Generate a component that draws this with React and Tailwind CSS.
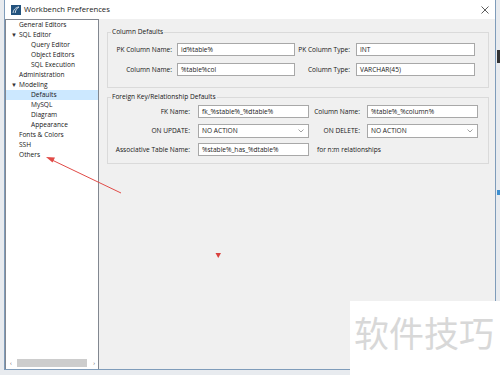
import React from "react";

const tree = [
  { label: "General Editors", level: 1 },
  { label: "SQL Editor", level: 1, open: true },
  { label: "Query Editor", level: 2 },
  { label: "Object Editors", level: 2 },
  { label: "SQL Execution", level: 2 },
  { label: "Administration", level: 1 },
  { label: "Modeling", level: 1, open: true },
  { label: "Defaults", level: 2, selected: true },
  { label: "MySQL", level: 2 },
  { label: "Diagram", level: 2 },
  { label: "Appearance", level: 2 },
  { label: "Fonts & Colors", level: 1 },
  { label: "SSH", level: 1 },
  { label: "Others", level: 1 },
];

const TextBox = ({ value, width }) => (
  <div
    className="h-[13px] border border-[#a8a8a8] bg-white pl-[3px] flex items-center text-[#1a1a1a]"
    style={{ width }}
  >
    {value}
  </div>
);

const SelectBox = ({ value, width }) => (
  <div
    className="h-[14px] border border-[#a8a8a8] bg-white pl-[3px] pr-[4px] flex items-center justify-between text-[#1a1a1a]"
    style={{ width }}
  >
    <span>{value}</span>
    <svg width="6" height="4" viewBox="0 0 6 4">
      <path d="M0.5 0.5 L3 3 L5.5 0.5" fill="none" stroke="#8a8a8a" strokeWidth="0.8" />
    </svg>
  </div>
);

const App = () => {
  return (
    <div
      className="relative w-[500px] h-[375px] overflow-hidden bg-[#e8ebef] text-[6.6px] text-[#161616]"
      style={{ fontFamily: '"Open Sans", "Noto Sans", sans-serif' }}
    >
      {/* Window */}
      <div className="ml-[4px] w-[492px] h-[370px] border-x border-b border-[#7f9cba] bg-white flex flex-col">
        {/* Title bar */}
        <div className="h-[19px] flex items-center bg-white">
          <svg className="ml-[6px]" width="10" height="10" viewBox="0 0 10 10">
            <rect width="10" height="10" fill="#22527d" />
            <path d="M2 8 C2.5 5 4 2.5 8 2 C6 3 4.5 5 4.2 8" fill="none" stroke="#dfe8f0" strokeWidth="0.9" />
          </svg>
          <span className="ml-[3px] text-[7.7px] text-[#1a1a1a]">Workbench Preferences</span>
          <svg className="ml-auto mr-[6px]" width="8" height="8" viewBox="0 0 8 8">
            <path d="M0.5 0.5 L7.5 7.5 M7.5 0.5 L0.5 7.5" stroke="#333" strokeWidth="0.8" />
          </svg>
        </div>

        {/* Body */}
        <div className="flex-1 flex bg-[#f0f0f0]">
          {/* Sidebar */}
          <div className="w-[94px] border-x border-t border-[#828790] bg-white flex flex-col">
            <div className="flex-1">
              {tree.map((item) => (
                <div
                  key={item.label}
                  className={`h-[10px] flex items-center leading-none ${item.selected ? "bg-[#cce8ff]" : ""}`}
                >
                  <span className="w-[13px] pl-[5px] text-[6px] text-[#333]">{item.open ? "▼" : ""}</span>
                  <span className={item.level === 2 ? "ml-[12px]" : ""}>{item.label}</span>
                </div>
              ))}
            </div>
            <div className="h-[10px] mb-[1px] flex items-center text-[6px] text-[#555]">
              <span className="w-[11px] pl-[4px]">‹</span>
              <div className="w-[70px] h-[8px] bg-[#cdcdcd]" />
              <span className="ml-auto pr-[3px]">›</span>
            </div>
          </div>

          {/* Content */}
          <div className="flex-1 pt-[8px] pl-[8px]">
            <fieldset className="w-[382px] border border-[#dadada] pb-[11px]">
              <legend className="ml-[3px] px-[1px] leading-[10px]">Column Defaults</legend>
              <div className="mt-[6px] flex items-center">
                <span className="w-[64px] text-right">PK Column Name:</span>
                <div className="w-[5px]" />
                <TextBox value="id%table%" width={118} />
                <span className="w-[55px] text-right">PK Column Type:</span>
                <div className="w-[6px]" />
                <TextBox value="INT" width={119} />
              </div>
              <div className="mt-[7px] flex items-center">
                <span className="w-[64px] text-right">Column Name:</span>
                <div className="w-[5px]" />
                <TextBox value="%table%col" width={118} />
                <span className="w-[55px] text-right">Column Type:</span>
                <div className="w-[6px]" />
                <TextBox value="VARCHAR(45)" width={119} />
              </div>
            </fieldset>

            <fieldset className="mt-[4px] w-[382px] border border-[#dadada] pb-[7px]">
              <legend className="ml-[3px] px-[1px] leading-[10px]">Foreign Key/Relationship Defaults</legend>
              <div className="mt-[3px] flex items-center">
                <span className="w-[82px] text-right">FK Name:</span>
                <div className="w-[8px]" />
                <TextBox value="fk_%stable%_%dtable%" width={111} />
                <span className="w-[51px] text-right">Column Name:</span>
                <div className="w-[7px]" />
                <TextBox value="%table%_%column%" width={111} />
              </div>
              <div className="mt-[6px] flex items-center">
                <span className="w-[82px] text-right">ON UPDATE:</span>
                <div className="w-[8px]" />
                <SelectBox value="NO ACTION" width={111} />
                <span className="w-[51px] text-right">ON DELETE:</span>
                <div className="w-[7px]" />
                <SelectBox value="NO ACTION" width={111} />
              </div>
              <div className="mt-[5px] flex items-center">
                <span className="w-[82px] text-right">Associative Table Name:</span>
                <div className="w-[8px]" />
                <TextBox value="%stable%_has_%dtable%" width={111} />
                <span className="ml-[8px]">for n:m relationships</span>
              </div>
            </fieldset>
          </div>
        </div>
      </div>

      {/* Desktop fragments right of the window */}
      <div className="absolute left-[497px] top-[50px] w-[3px] h-[13px] bg-[#333]" />
      <div className="absolute left-[497px] top-[190px] w-[3px] h-[5px] bg-[#3d8fd0]" />

      {/* Red annotation arrow */}
      <svg className="absolute left-0 top-0" width="500" height="375" viewBox="0 0 500 375">
        <path d="M121 193 L52 160" stroke="#e14b47" strokeWidth="1" fill="none" />
        <path d="M46 157 L55 157.5 L52.5 162.5 Z" fill="#e14b47" />
        <path d="M215.5 253 L221 253 L218.25 258 Z" fill="#d9403d" />
      </svg>

      {/* Watermark */}
      <div className="absolute left-[350px] top-[301px] w-[150px] h-[74px] bg-white">
        <div
          className="mt-[13px] ml-[4px] text-[35px] leading-none text-[#d8d8d8]"
          style={{ fontFamily: '"Noto Sans CJK SC", sans-serif' }}
        >
          软件技巧
        </div>
      </div>
    </div>
  );
};

export default App;
